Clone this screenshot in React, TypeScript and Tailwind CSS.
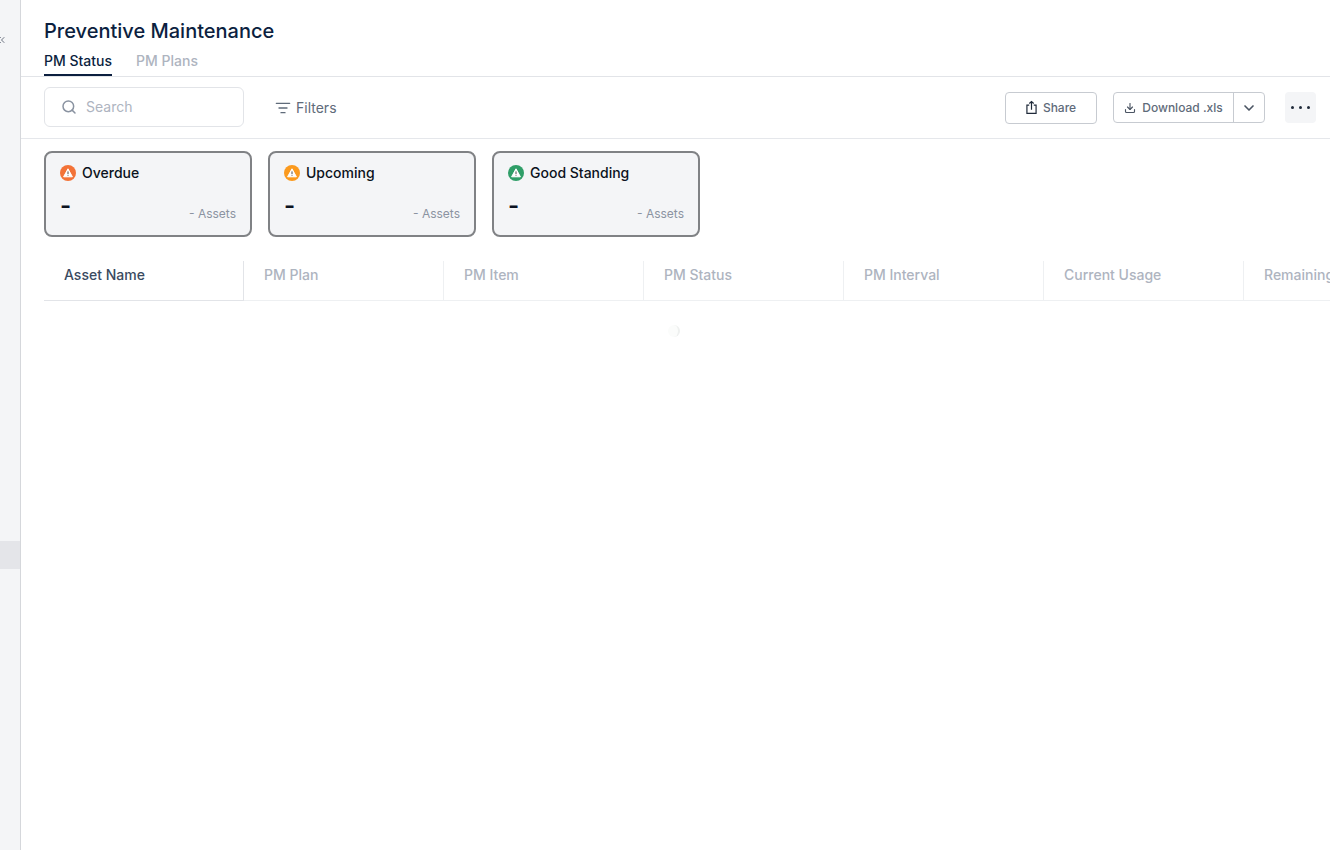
import { ChevronDown, ChevronsLeft, Download, ListFilter, Search } from "lucide-react"

const summaries = [
  { label: "Overdue", color: "bg-[#f37338]" },
  { label: "Upcoming", color: "bg-[#fb9a1e]" },
  { label: "Good Standing", color: "bg-[#2f9e68]" },
]

const columns = ["PM Plan", "PM Item", "PM Status", "PM Interval", "Current Usage", "Remaining"]

function WarningBadge({ color }: { color: string }) {
  return (
    <span className={`flex h-4 w-4 shrink-0 items-center justify-center rounded-full ${color}`}>
      <svg viewBox="0 0 10 10" className="h-[10px] w-[10px]">
        <path d="M5 .8 9.4 8.8H.6z" fill="#fff" stroke="#fff" strokeWidth="1" strokeLinejoin="round" />
        <path d="M5 3.4v2.6M5 6.8v.9" stroke="#4a4a4a" strokeWidth="1" />
      </svg>
    </span>
  )
}

function SummaryCard({ label, color }: { label: string; color: string }) {
  return (
    <div className="flex h-[86px] w-[208px] flex-col rounded-lg border-2 border-[#808285] bg-[#f4f5f7] px-[14px] pt-[10px]">
      <div className="flex items-center gap-[6px] text-sm font-medium leading-5 text-[#0b1220]">
        <WarningBadge color={color} />
        {label}
      </div>
      <div className="mt-[7px] flex items-end justify-between">
        <span className="text-2xl font-semibold leading-8 text-[#0b1220]">-</span>
        <span className="text-xs leading-4 text-[#8b93a1]">- Assets</span>
      </div>
    </div>
  )
}

export default function App() {
  return (
    <div className="flex h-[850px] w-[1330px] overflow-hidden bg-white font-['Inter',sans-serif]">
      <aside className="flex w-[21px] shrink-0 flex-col border-r border-[#d5d7db] bg-[#f4f5f7]">
        <div className="mt-[34px] flex h-3 items-center">
          <ChevronsLeft className="-ml-[5px] h-3 w-3 text-[#6b7280]" />
        </div>
        <div className="mt-[495px] h-[28px] bg-[#e4e5e9]" />
      </aside>

      <main className="min-w-0 flex-1">
        <header className="border-b border-[#e2e4e8] pl-[23px]">
          <h1 className="pt-[18px] text-xl font-medium leading-[26px] text-[#0c1f3f]">Preventive Maintenance</h1>
          <div className="mt-[7px] flex gap-6 text-sm font-medium">
            <span className="border-b-2 border-[#0c1f3f] pb-[3px] leading-5 text-[#0c1f3f]">PM Status</span>
            <span className="leading-5 text-[#aeb4bf]">PM Plans</span>
          </div>
        </header>

        <div className="flex h-[62px] items-center border-b border-[#e5e7eb] pl-[23px] pr-[14px]">
          <div className="mb-[2px] flex h-10 w-[200px] items-center gap-[9px] rounded-md border border-[#e2e4e8] px-4">
            <Search className="h-4 w-4 text-[#8a93a1]" strokeWidth={2.25} />
            <span className="text-sm text-[#aeb4bf]">Search</span>
          </div>
          <div className="ml-[31px] flex items-center gap-[5px] text-sm text-[#5f6b7a]">
            <ListFilter className="h-4 w-4 text-[#5f6b7a]" />
            Filters
          </div>
          <div className="ml-auto flex items-center gap-4">
            <button className="flex h-8 w-[92px] items-center justify-center gap-[6px] rounded border border-[#c7cbd1] text-xs font-medium text-[#5f6b7a]">
              <svg viewBox="0 0 12 15" className="h-[15px] w-[11px]" fill="none" stroke="#1f2a3a" strokeWidth="1.3">
                <path d="M3.5 5H1v9h10V5H8.5" />
                <path d="M6 10V1M3.6 3.2 6 1l2.4 2.2" />
              </svg>
              Share
            </button>
            <div className="flex h-[31px] w-[152px] rounded border border-[#c7cbd1] text-xs font-medium text-[#5f6b7a]">
              <button className="flex flex-1 items-center justify-center gap-[6px] border-r border-[#c7cbd1]">
                <Download className="h-3 w-3 text-[#4b5563]" strokeWidth={2.25} />
                Download .xls
              </button>
              <button className="flex w-[30px] items-center justify-center">
                <ChevronDown className="h-4 w-4 text-[#4b5563]" strokeWidth={2.5} />
              </button>
            </div>
            <button className="ml-1 flex h-[31px] w-[31px] items-center justify-center gap-[5px] rounded bg-[#f4f5f7]">
              <span className="h-[3px] w-[3px] rounded-full bg-[#1f2a3a]" />
              <span className="h-[3px] w-[3px] rounded-full bg-[#1f2a3a]" />
              <span className="h-[3px] w-[3px] rounded-full bg-[#1f2a3a]" />
            </button>
          </div>
        </div>

        <div className="flex gap-4 pl-[23px] pt-3">
          {summaries.map((s) => (
            <SummaryCard key={s.label} label={s.label} color={s.color} />
          ))}
        </div>

        <div className="ml-[23px] mt-6 flex h-[40px] border-b border-[#eef0f2] text-sm font-medium leading-5">
          <div className="-mb-px w-[200px] shrink-0 border-b border-r border-[#e2e4e8] pl-5 pt-1 text-[#3a4a5f]">Asset Name</div>
          {columns.map((c) => (
            <div key={c} className="w-[200px] shrink-0 whitespace-nowrap border-r border-[#eef0f2] pl-5 pt-1 text-[#aeb4bf] last:border-r-0">
              {c}
            </div>
          ))}
        </div>

        <div className="flex justify-center pr-[4px] pt-6">
          <span className="h-3 w-3 rounded-full border-r-2 border-[#eef0ef] bg-[#fbfcfb]" />
        </div>
      </main>
    </div>
  )
}
